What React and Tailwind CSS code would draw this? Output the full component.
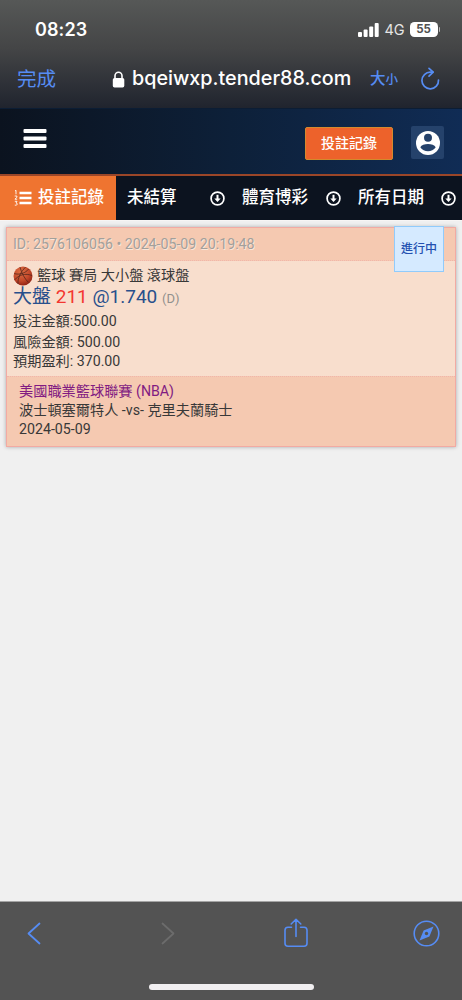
import React from 'react';

const tabs = [
  { label: '未結算', className: 'w-[115px]' },
  { label: '體育博彩', className: 'w-[116px]' },
  { label: '所有日期', className: 'w-[115px]' },
];

const DownIcon = () => (
  <svg className="w-[15px] h-[15px] shrink-0" viewBox="0 0 15 15" fill="none" stroke="white">
    <circle cx="7.5" cy="7.5" r="6.4" strokeWidth="1.7" />
    <path d="M7.5 3.8v5" strokeWidth="2" />
    <path d="M4.3 7.4h6.4L7.5 11z" fill="white" stroke="none" />
  </svg>
);

const Basketball = () => (
  <svg className="w-5 h-5 shrink-0" viewBox="0 0 20 20" fill="none">
    <defs>
      <radialGradient id="ball" cx="40%" cy="30%" r="75%">
        <stop offset="0" stopColor="#df7145" />
        <stop offset="0.6" stopColor="#c2482a" />
        <stop offset="1" stopColor="#8b1d12" />
      </radialGradient>
    </defs>
    <circle cx="10" cy="10" r="9.5" fill="url(#ball)" />
    <g stroke="#54251a" strokeWidth="0.8">
      <path d="M1.2 7.5c5 1.8 11.500-.5 14.500-4.500M7 1.200c1.500 6 5 12 8.500 15.300M1.500 14c4.500-5.500 11-7 17.500-4.500M5 18c-.5-6 3-12.500 7.500-16.800" />
    </g>
  </svg>
);

const BrowserBar = () => (
  <header className="h-[108px] bg-linear-to-b from-[#565857] via-[#444546] via-45% to-[#20242e] text-white font-[Inter,'Noto_Sans_CJK_TC',sans-serif]">
    <div className="flex items-center h-[59px] pl-[35px] pr-[22px]">
      <span className="text-[18px] font-semibold tracking-[0.1px]">08:23</span>
      <div className="flex items-center ml-auto">
        <svg className="w-[21px] h-[14px]" viewBox="0 0 21 14" fill="white">
          <rect x="0" y="9" width="4" height="5" rx="1" />
          <rect x="5.6" y="6.5" width="4" height="7.5" rx="1" />
          <rect x="11.2" y="3.5" width="4" height="10.5" rx="1" />
          <rect x="16.7" y="0" width="4" height="14" rx="1" />
        </svg>
        <span className="ml-[6px] w-[20px] text-[14.5px] text-[#e5e5e5] whitespace-nowrap">4G</span>
        <span className="ml-[5px] flex items-center justify-center w-[28px] h-[15px] rounded-[4.5px] bg-white text-[#505151] text-[11.5px] font-bold leading-none">55</span>
        <span className="ml-px w-[1.5px] h-[5px] rounded-r-full bg-[#b9b9b9]" />
      </div>
    </div>
    <div className="flex items-center h-10 pl-[17px] pr-[22px] text-[#568cf3]">
      <span className="w-[95px] text-[19.5px] leading-10">完成</span>
      <svg className="w-[13px] h-[17px]" viewBox="0 0 13 17">
        <rect x="0.8" y="7" width="11.500" height="9.500" rx="1.700" fill="white" />
        <path d="M3 8V4.800a3.500 3.500 0 0 1 7 0V8" fill="none" stroke="white" strokeWidth="1.600" />
      </svg>
      <span className="ml-[7px] w-[238px] text-[19.75px] font-medium text-white whitespace-nowrap">bqeiwxp.tender88.com</span>
      <span className="text-[15.5px] font-medium whitespace-nowrap">大<span className="text-[12.5px]">小</span></span>
      <svg className="ml-auto -mt-px w-[20px] h-[23px]" viewBox="0 0 20 23" fill="none" stroke="currentColor" strokeWidth="1.7" strokeLinecap="round" strokeLinejoin="round">
        <path d="M12.800 5.200H10.500A8.300 8.300 0 1 0 18.500 13" />
        <path d="M9 1.300l4.200 3.900-4.200 3.900" />
      </svg>
    </div>
  </header>
);

const SiteHeader = () => (
  <nav className="flex h-[66px] pt-[18px] bg-linear-to-r from-[#0b131f] via-[#0d2039] to-[#102c55] border-t border-[#0c1d34]">
    <svg className="ml-[23px] mt-[1px] w-[24px] h-[21px]" viewBox="0 0 24 21" fill="white">
      <rect x="0.5" y="1" width="23" height="4" rx="1" />
      <rect x="0.5" y="8.5" width="23" height="4" rx="1" />
      <rect x="0.5" y="16" width="23" height="4" rx="1" />
    </svg>
    <button className="ml-auto w-[88px] h-[33px] rounded-[2px] border border-[#d38a2d] bg-[#ed622b] text-white text-[14px] font-medium leading-[31px]">投註記錄</button>
    <div className="ml-[18px] mr-[18px] -mt-px flex items-center justify-center w-[33px] h-[33px] rounded-[2px] bg-[#25426b]">
      <svg className="w-6 h-6" viewBox="0 0 24 24">
        <circle cx="12" cy="12" r="12" fill="white" />
        <circle cx="12" cy="6.700" r="4" fill="#25426b" />
        <path d="M4.300 16.200c2.200-4.300 13.200-4.300 15.400 0-3.500 5.500-11.900 5.500-15.400 0z" fill="#25426b" />
      </svg>
    </div>
  </nav>
);

const Tabs = () => (
  <div className="flex h-[46px] border-t-2 border-[#9b4628] bg-[#0c131f] text-white text-[16.5px] font-medium leading-[42px] overflow-hidden">
    <div className="flex items-center w-[116px] shrink-0 pl-[14px] bg-[#ef7430]">
      <svg className="w-[18px] h-[18px] mr-[6px]" viewBox="0 0 18 18" stroke="white" fill="none">
        <path d="M5.5 4h12M5.5 9h12M5.5 14h12" strokeWidth="2.3" />
        <path d="M1 2l1-.7v4M.7 7h2.2v1.3L.9 10.2h2.3M.8 12.3h2.2l-1 1.7c2 0 1.6 2.9-1.2 2.1" strokeWidth="0.9" />
      </svg>
      <span className="whitespace-nowrap">投註記錄</span>
    </div>
    {tabs.map((tab) => (
      <div key={tab.label} className={`flex items-center justify-between shrink-0 pl-[11px] pr-[6px] ${tab.className}`}>
        <span className="whitespace-nowrap">{tab.label}</span>
        <DownIcon />
      </div>
    ))}
  </div>
);

const BetCard = () => (
  <article className="relative h-[220px] border border-[#f2aaa3] bg-[#f8decd] shadow-[0_0_4px_rgba(0,0,0,0.3)] text-[14.2px] text-[#383838]">
    <div className="h-[33px] pl-[6px] border-b border-dotted border-[#f1b5aa] bg-[#f5c9b1] text-[#a2a09b] leading-[33px] [text-shadow:1px_1px_0_#fbe6da]">
      ID: 2576106056 • 2024-05-09 20:19:48
    </div>
    <div className="h-[115px] pl-[6px]">
      <div className="flex items-center h-[27px] pt-[2px]">
        <Basketball />
        <span className="ml-[4px]">籃球 賽局 大小盤 滾球盤</span>
      </div>
      <div className="h-[21px] text-[19px] leading-[18px] text-[#28508c] whitespace-nowrap">
        大盤 <span className="text-[#f33630]">211</span> @1.740 <span className="text-[13px] text-[#92908d]">(D)</span>
      </div>
      <p className="h-[22px] leading-[24px]">投注金額:500.00</p>
      <p className="h-[19px] leading-[22px]">風險金額: 500.00</p>
      <p className="h-[19px] leading-[22px]">預期盈利: 370.00</p>
    </div>
    <div className="h-[70px] border-t border-dotted border-[#f1b5aa] bg-[#f5c9b1] pl-[12px] pt-[5px] leading-[19px]">
      <p className="text-[#811b82]">美國職業籃球聯賽 (NBA)</p>
      <p>波士頓塞爾特人 -vs- 克里夫蘭騎士</p>
      <p>2024-05-09</p>
    </div>
    <span className="absolute right-[11px] top-[-2px] w-[50px] h-[46px] border border-[#91cbfb] bg-[#d5eaff] text-center text-[12px] font-medium leading-[44px] text-[#2450b0]">進行中</span>
  </article>
);

const BottomBar = () => (
  <footer className="h-[99px] border-t border-[#a4a4a4] bg-[#535353] text-[#568cf3]">
    <div className="flex items-center h-[63px] pl-[27px] pr-[22px]">
      <svg className="w-[15px] h-[23px]" viewBox="0 0 15 23" fill="none" stroke="currentColor" strokeWidth="1.8" strokeLinecap="round" strokeLinejoin="round">
        <path d="M12.5 1.5l-11 10 11 10" />
      </svg>
      <svg className="ml-[118px] w-[15px] h-[23px]" viewBox="0 0 15 23" fill="none" stroke="#6c6c6c" strokeWidth="1.7" strokeLinecap="round" strokeLinejoin="round">
        <path d="M2.5 1.5l11 10-11 10" />
      </svg>
      <svg className="ml-[109px] mt-[-1px] w-[24px] h-[30px]" viewBox="0 0 24 30" fill="none" stroke="currentColor" strokeWidth="1.6" strokeLinecap="round" strokeLinejoin="round">
        <path d="M7.5 9.3H4a3 3 0 0 0-3 3v13a3 3 0 0 0 3 3h16a3 3 0 0 0 3-3v-13a3 3 0 0 0-3-3h-3.5M12 18.5V1.3M7.2 6L12 1.3 16.8 6" />
      </svg>
      <svg className="ml-auto w-[27px] h-[27px]" viewBox="0 0 27 27">
        <circle cx="13.5" cy="13.5" r="12.3" fill="none" stroke="currentColor" strokeWidth="1.6" />
        <path d="M20.5 6.500l-4.100 9.900-9.900 4.100 4.100-9.900z" fill="currentColor" />
        <circle cx="13.5" cy="13.5" r="1.7" fill="#535353" />
      </svg>
    </div>
    <div className="mx-auto mt-[19px] w-[165px] h-[6px] rounded-full bg-[#f1eff1]" />
  </footer>
);

const App = () => (
  <div className="flex flex-col w-[462px] h-[1000px] overflow-hidden bg-[#f0f0f0] font-[Roboto,'Noto_Sans_CJK_TC',sans-serif]">
    <BrowserBar />
    <SiteHeader />
    <Tabs />
    <main className="flex-1 pt-[6px] px-[6px] border-t border-[#f7f5f4]">
      <BetCard />
    </main>
    <BottomBar />
  </div>
);

export default App;
